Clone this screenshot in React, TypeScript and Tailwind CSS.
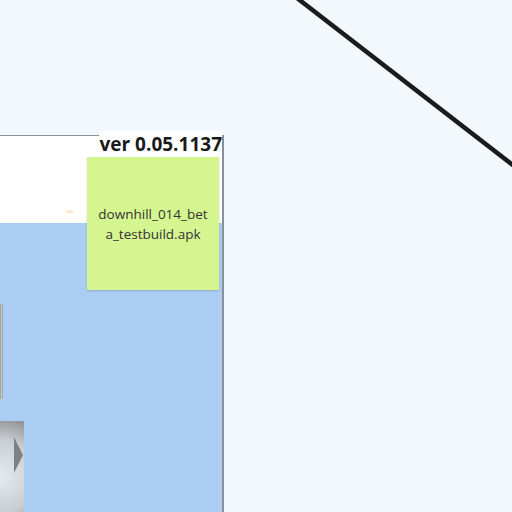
import React from "react";

export default function App() {
  return (
    <div
      className="relative w-[512px] h-[512px] overflow-hidden bg-[#f3f8fd]"
      style={{ fontFamily: '"Open Sans", "Noto Sans", sans-serif' }}
    >
      {/* connector line */}
      <svg className="absolute left-0 top-0" width="512" height="512">
        <line x1="297" y1="-2" x2="514" y2="166" stroke="#1b1b1b" strokeWidth="4.5" />
      </svg>

      {/* frame */}
      <div className="absolute left-0 top-[135px] w-[224px] h-[377px] flex flex-col border-t border-r-2 border-[#8a9099]">
        <div className="h-[87px] bg-white relative">
          <div className="absolute left-[66px] top-[74px] w-[7px] h-[3px] bg-[#fde8d2]" />
        </div>
        <div className="flex-1 bg-[#abcdf3] relative">
          <div className="absolute left-0 top-[81px] w-[3px] h-[95px] bg-gradient-to-r from-[#8c8f92] via-[#c9c9c4] to-[#9a9a94]" />
          <div className="absolute left-0 top-[198px] w-[24px] h-[92px] bg-[radial-gradient(circle_at_0%_60%,#e6ebef,#c9ced2_60%,#8e9194)] overflow-hidden">
            <svg className="absolute left-[14px] top-[16px]" width="10" height="36" viewBox="0 0 10 36">
              <polygon points="0,0 9,18 0,36" fill="#7d8185" />
            </svg>
          </div>
        </div>
      </div>

      {/* version label */}
      <div className="absolute left-[99px] top-[131px] w-[123px] h-[26px] bg-white flex items-center justify-end">
        <span className="text-[19px] font-bold text-[#1a1a1a] leading-none whitespace-nowrap">ver 0.05.1137</span>
      </div>

      {/* sticky note */}
      <div className="absolute left-[87px] top-[157px] w-[132px] h-[133px] bg-[#d5f590] shadow-[0_1px_2px_rgba(0,0,0,0.18)] flex items-center justify-center text-center">
        <p className="text-[13.5px] leading-[20px] text-[#333333]">
          downhill_014_bet
          <br />
          a_testbuild.apk
        </p>
      </div>
    </div>
  );
}
